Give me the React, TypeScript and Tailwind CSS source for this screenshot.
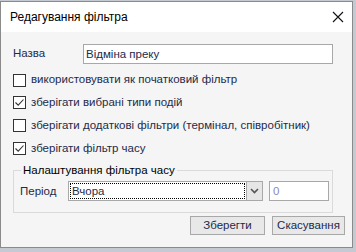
import { useState } from "react";

const FONT = { fontFamily: "'Liberation Sans', Arial, sans-serif" };

function Check({ checked, label, first }: { checked: boolean; label: string; first?: boolean }) {
  return (
    <div className={first ? "flex h-[22px] items-center" : "flex h-[23px] items-center"}>
      <span className="flex h-[13px] w-[13px] shrink-0 items-center justify-center border border-[#333] bg-white">
        {checked && (
          <svg width="11" height="11" viewBox="0 0 11 11">
            <path d="M1.5 5.5 L4.2 8.2 L9.5 2.5" fill="none" stroke="#333" strokeWidth="1.1" />
          </svg>
        )}
      </span>
      <span className="ml-[5px] whitespace-nowrap text-[11.5px] text-[#1f2a48]">{label}</span>
    </div>
  );
}

export default function App() {
  const [name, setName] = useState("Відміна преку");
  return (
    <div className="h-[252px] w-[356px] overflow-hidden bg-[#c4c9d2] pt-px" style={FONT}>
      <div className="flex h-[247px] w-[353px] flex-col border border-[#8a8a8a] bg-[#f5f5f5]">
        <div className="flex h-[30px] items-center justify-between bg-white pl-[9px] pr-[8px]">
          <span className="text-[12px] text-black">Редагування фільтра</span>
          <svg width="12" height="12" viewBox="0 0 12 12">
            <path d="M1 1 L11 11 M11 1 L1 11" stroke="#111" strokeWidth="1.1" />
          </svg>
        </div>
        <div className="flex flex-col px-[12px] pt-[12px]">
          <div className="flex items-center">
            <span className="w-[70px] text-[11.5px] text-[#1f2a48]">Назва</span>
            <input
              value={name}
              onChange={(e) => setName(e.target.value)}
              className="h-[20px] w-[250px] border border-[#a8a8a8] bg-white px-[2px] text-[11.5px] text-[#1f2a48] outline-none"
              style={FONT}
            />
          </div>
          <div className="mt-[5px] flex flex-col">
            <Check first checked={false} label="використовувати як початковий фільтр" />
            <Check checked label="зберігати вибрані типи подій" />
            <Check checked={false} label="зберігати додаткові фільтри (термінал, співробітник)" />
            <Check checked label="зберігати фільтр часу" />
          </div>
          <fieldset className="mt-[2px] w-[320px] border border-[#dadada] pb-[11px] pl-[6px] pt-[2px]">
            <legend className="ml-[1px] px-[2px] text-[11.5px] text-black">Налаштування фільтра часу</legend>
            <div className="flex items-center">
              <span className="w-[48px] text-[11.5px] text-[#1f2a48]">Період</span>
              <div className="flex h-[20px] w-[195px] border border-[#a8a8a8] bg-white">
                <div className="m-px flex flex-1 items-center border border-dotted border-black px-px text-[11.5px] text-[#1f2a48]">
                  Вчора
                </div>
                <div className="flex w-[16px] items-center justify-center border-l border-[#a8a8a8] bg-[#e6e6e6]">
                  <svg width="9" height="6" viewBox="0 0 9 6">
                    <path d="M1 1 L4.5 4.5 L8 1" fill="none" stroke="#555" strokeWidth="1.6" />
                  </svg>
                </div>
              </div>
              <div className="ml-[6px] flex h-[20px] w-[60px] items-center border border-[#a8a8a8] bg-white px-[3px] text-[11.5px] text-[#8a8ab8]">
                0
              </div>
            </div>
          </fieldset>
          <div className="mt-[3px] flex justify-end gap-[7px]">
            <button className="h-[19px] w-[75px] border border-[#a8a8a8] bg-[#e8e8e8] text-[11.5px] text-[#1f2a48]" style={FONT}>
              Зберегти
            </button>
            <button className="mr-[-5px] h-[19px] w-[73px] border border-[#a8a8a8] bg-[#e8e8e8] text-[11.5px] text-[#1f2a48]" style={FONT}>
              Скасування
            </button>
          </div>
        </div>
      </div>
    </div>
  );
}
